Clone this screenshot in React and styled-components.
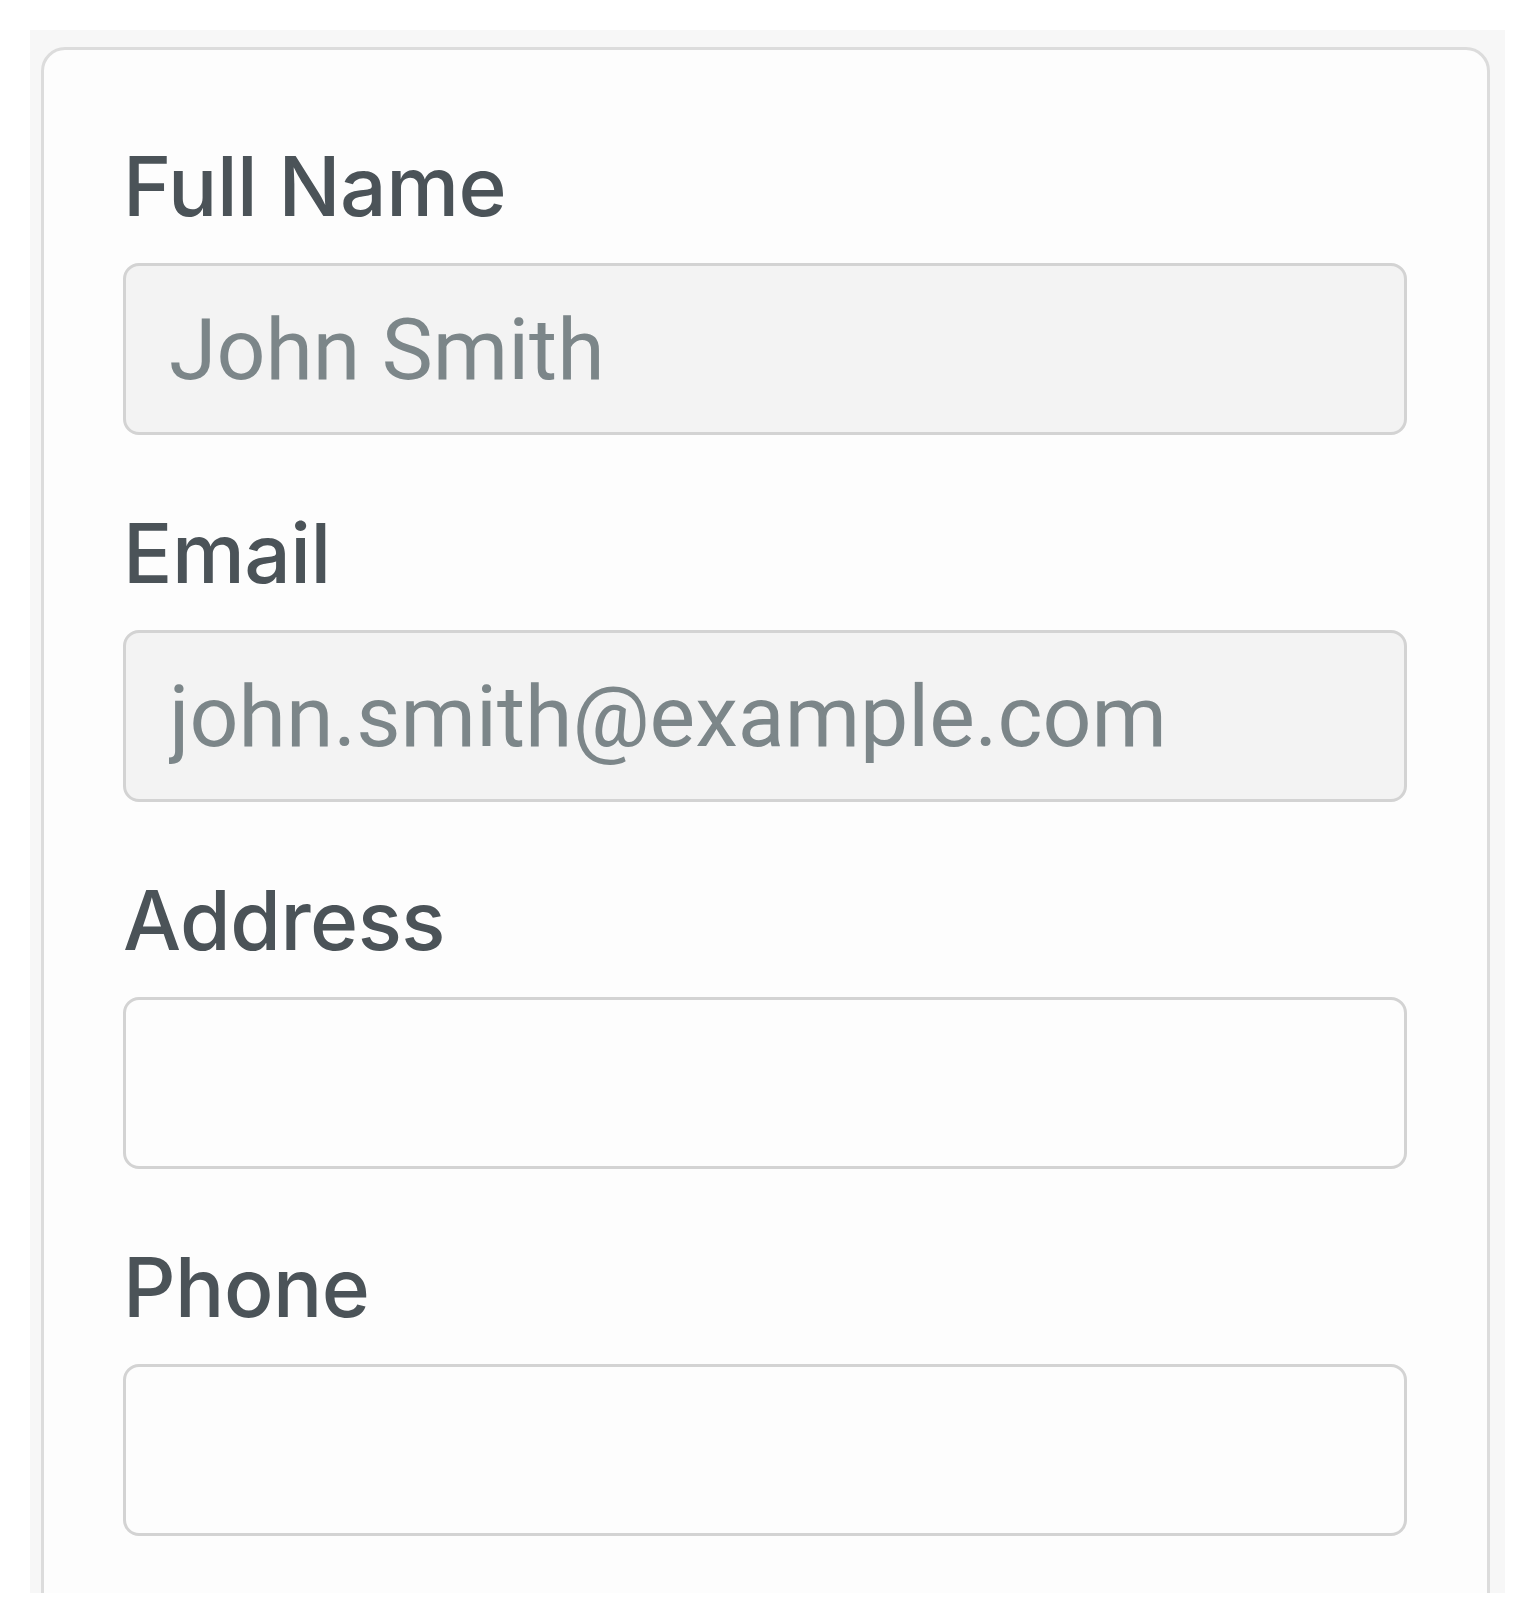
import React from "react";
import styled, { createGlobalStyle } from "styled-components";

const Global = createGlobalStyle`
  html, body { margin: 0; padding: 0; background: #ffffff; }
  body { font-family: Inter, "Liberation Sans", sans-serif; }
  * { box-sizing: border-box; }
`;

const Page = styled.div`
  width: 1534px;
  height: 1624px;
  padding: 30px 29px 31px 30px;
  background: #ffffff;
`;

const Panel = styled.div`
  height: 1563px;
  background: #f7f7f7;
  padding: 17px 15px 0 11px;
  overflow: hidden;
`;

const Card = styled.form`
  display: flex;
  flex-direction: column;
  gap: 78px;
  min-height: 1700px;
  background: #fdfdfd;
  border: 3px solid #dcdcdc;
  border-radius: 24px;
  padding: 96px 80px 0 79px;
`;

const Field = styled.div`
  display: flex;
  flex-direction: column;
  gap: 35px;
`;

const Label = styled.label`
  font-family: Inter, "Liberation Sans", sans-serif;
  font-weight: 500;
  font-size: 82px;
  line-height: 82px;
  color: #4b5358;
  letter-spacing: -0.5px;
`;

const Input = styled.input`
  display: block;
  width: 100%;
  height: 172px;
  border: 3px solid #d3d3d3;
  border-radius: 16px;
  background: ${(p) => (p.$filled ? "#f3f3f3" : "#fdfdfd")};
  padding: 0 40px 0 43px;
  font-family: Roboto, "Liberation Sans", sans-serif;
  font-size: 86px;
  color: #7c8689;
  outline: none;
  &::placeholder { color: #7c8689; }
`;

const fields = [
  { label: "Full Name", value: "John Smith" },
  { label: "Email", value: "john.smith@example.com" },
  { label: "Address", value: "" },
  { label: "Phone", value: "" },
];

export default function App() {
  return (
    <>
      <Global />
      <Page>
        <Panel>
          <Card onSubmit={(e) => e.preventDefault()}>
            {fields.map((f) => (
              <Field key={f.label}>
                <Label>{f.label}</Label>
                <Input $filled={!!f.value} defaultValue={f.value} readOnly={!!f.value} />
              </Field>
            ))}
          </Card>
        </Panel>
      </Page>
    </>
  );
}
